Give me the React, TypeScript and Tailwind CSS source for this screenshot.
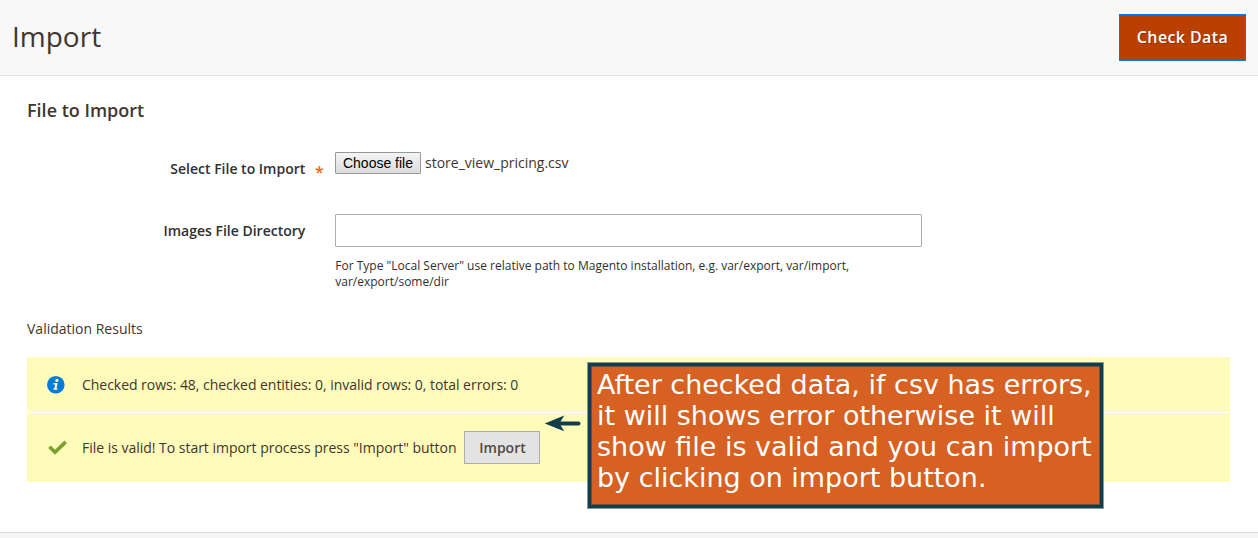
function InfoIcon() {
  return (
    <svg className="block" width="18" height="18" viewBox="0 0 18 18" aria-hidden="true">
      <circle cx="8.8" cy="8.8" r="8.8" fill="#007bdb" />
      <circle cx="9.9" cy="4.4" r="1.6" fill="#fffbbb" />
      <path d="M6.5 7.1H10.7L9.5 12.4H10.7L10.4 13.7H6.2L6.5 12.4H7.3L8.2 8.4H6.2Z" fill="#fffbbb" />
    </svg>
  );
}

function CheckIcon() {
  return (
    <svg className="block" width="19" height="15" viewBox="0 0 19 15" aria-hidden="true">
      <path d="M1.5 6.8L7 12.2L17.7 1.9" fill="none" stroke="#79a22e" strokeWidth="3.6" />
    </svg>
  );
}

function Header() {
  return (
    <header className="flex h-[76px] items-start justify-between border-b border-[#e3e3e3] bg-[#f8f8f8] pt-[14px] pr-3 pl-3">
      <h1 className="text-[28px] leading-[44px] text-[#41362f]">Import</h1>
      <button className="h-[47px] w-[127px] border border-[#007bdb] bg-[#ba4000] pb-px text-[16px] font-semibold tracking-[0.4px] text-white [text-shadow:1px_1px_0_rgba(0,0,0,0.25)]">
        Check Data
      </button>
    </header>
  );
}

function ImportForm() {
  return (
    <section>
      <h2 className="text-[18px] leading-6 font-semibold text-[#41362f]">File to Import</h2>
      <div className="mt-[30px] flex h-[62px]">
        <div className="flex w-[308px] items-start pt-[7px] font-semibold text-[#303030]">
          <span className="w-[278.3px] text-right leading-5">Select File to Import</span>
          <span className="mt-[3px] ml-[9.7px] text-[16px] leading-5 font-semibold text-[#eb6a10]">*</span>
        </div>
        <div className="flex h-[22px] items-center">
          <button className="h-[22px] w-[86px] rounded-[1px] border border-[#999] bg-linear-to-b from-[#f4f4f4] to-[#dcdcdc] font-['Liberation_Sans',sans-serif] text-[14px] leading-5 text-black">
            Choose file
          </button>
          <span className="ml-1 leading-5">store_view_pricing.csv</span>
        </div>
      </div>
      <div className="flex">
        <label htmlFor="images-dir" className="w-[278.3px] pt-[7px] text-right leading-5 font-semibold text-[#303030]">
          Images File Directory
        </label>
        <div className="ml-[29.7px] w-[587px]">
          <input id="images-dir" className="block h-[33px] w-full rounded-[1px] border border-[#adadad] bg-white px-2 outline-none" />
          <p className="mt-[11px] pl-[0.3px] text-[12px] leading-4 text-[#303030]">
            For Type "Local Server" use relative path to Magento installation, e.g. var/export, var/import,
            <br />
            var/export/some/dir
          </p>
        </div>
      </div>
    </section>
  );
}

function ValidationResults() {
  return (
    <section className="mt-7">
      <h3 className="leading-[22px]">Validation Results</h3>
      <div className="mt-[17px] mr-px flex flex-col gap-px">
        <div className="flex h-[55px] items-center bg-[#fffbbb]">
          <span className="w-[55px] pl-5"><InfoIcon /></span>
          <span className="tracking-[-0.035px]">Checked rows: 48, checked entities: 0, invalid rows: 0, total errors: 0</span>
        </div>
        <div className="flex h-[69px] items-center bg-[#fffbbb]">
          <span className="w-[55px] pl-[21px]"><CheckIcon /></span>
          <span className="w-[374px] tracking-[-0.02px] whitespace-nowrap">File is valid! To start import process press "Import" button</span>
          <button className="ml-2 h-[33px] w-[76px] border border-[#adadad] bg-[#e3e3e3] pl-px font-semibold text-[#514943]">Import</button>
        </div>
      </div>
    </section>
  );
}

function Annotation() {
  return (
    <>
      <svg className="absolute top-[414px] left-[544px]" width="38" height="19" viewBox="0 0 38 19" aria-hidden="true">
        <path d="M15 9.5H34.5" stroke="#123e4c" strokeWidth="4" strokeLinecap="round" />
        <path d="M.8 9.5L20.2 1.5L15.5 9.5L20.2 17.2Z" fill="#123e4c" />
      </svg>
      <div className="absolute top-[362px] left-[587px] h-[147px] w-[517px] border border-[#7f9ba1] bg-[#123e4c] p-[3px]">
        <div className="h-full border border-[#754d32] bg-[#d66123] pt-[2px] pl-[5px] font-['DejaVu_Sans',sans-serif] text-[26.97px] leading-[31.1px] whitespace-nowrap text-white">
          <p>After checked data, if csv has errors,</p>
          <p>it will shows error otherwise it will</p>
          <p>show file is valid and you can import</p>
          <p>by clicking on import button.</p>
        </div>
      </div>
    </>
  );
}

export default function App() {
  return (
    <div className="relative flex h-[538px] w-[1258px] flex-col overflow-hidden bg-white font-['Open_Sans',sans-serif] text-[14px] leading-5 text-[#41362f]">
      <Header />
      <main className="flex-1 px-[27px] pt-[22px]">
        <ImportForm />
        <ValidationResults />
      </main>
      <footer className="h-[6px] border-t border-[#dcdcdc] bg-[#f5f5f5]" />
      <Annotation />
    </div>
  );
}
